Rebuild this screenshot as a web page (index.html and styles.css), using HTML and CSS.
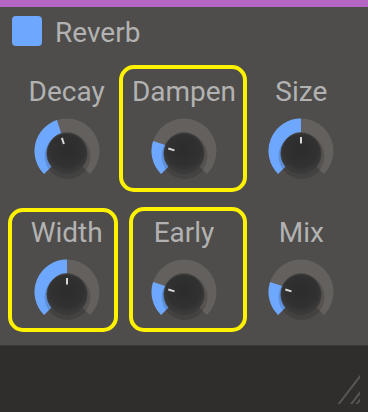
FILE: index.html
```html
<!DOCTYPE html>
<html lang="en">
<head>
    <meta charset="UTF-8">
    <meta name="viewport" content="width=device-width, initial-scale=1.0">
    <title>Reverb</title>
    <link rel="stylesheet" href="styles.css">
</head>
<body>

<div class="topbar"></div>

<div class="header">
    <div class="toggle"></div>
    <span class="title">Reverb</span>
</div>

<div class="controls">
    <div class="cell">
        <div class="label">Decay</div>
        <div class="knob" data-value="0.433"></div>
    </div>
    <div class="cell hl hl-dampen">
        <div class="label">Dampen</div>
        <div class="knob" data-value="0.233"></div>
    </div>
    <div class="cell">
        <div class="label">Size</div>
        <div class="knob" data-value="0.5"></div>
    </div>
    <div class="cell hl hl-width">
        <div class="label">Width</div>
        <div class="knob" data-value="0.5"></div>
    </div>
    <div class="cell hl hl-early">
        <div class="label">Early</div>
        <div class="knob" data-value="0.233"></div>
    </div>
    <div class="cell">
        <div class="label">Mix</div>
        <div class="knob" data-value="0.233"></div>
    </div>
</div>

<div class="footer">
    <svg class="grip" width="26" height="32" viewBox="0 0 26 32">
        <polygon points="3.5,32 6,32 26,6 26,2.75" fill="#585755"/>
        <polygon points="16,32 18.5,32 26,22.25 26,19" fill="#585755"/>
        <polygon points="21.5,32 24,32 26,29.4 26,26.15" fill="#585755"/>
    </svg>
</div>

<script>
    // knob angles run from -135 (min) to +135 (max), 0 = straight up
    function pt(cx, cy, r, deg) {
        const a = deg * Math.PI / 180;
        return [(cx + r * Math.sin(a)).toFixed(2), (cy - r * Math.cos(a)).toFixed(2)];
    }

    function band(cx, cy, r1, r2, a0, a1) {
        const large = (a1 - a0) > 180 ? 1 : 0;
        const o0 = pt(cx, cy, r2, a0), o1 = pt(cx, cy, r2, a1);
        const i1 = pt(cx, cy, r1, a1), i0 = pt(cx, cy, r1, a0);
        return `M${o0} A${r2} ${r2} 0 ${large} 1 ${o1} L${i1} A${r1} ${r1} 0 ${large} 0 ${i0} Z`;
    }

    document.querySelectorAll('.knob').forEach(function (k, idx) {
        const v = parseFloat(k.dataset.value);
        const ang = -135 + v * 270;
        const p1 = pt(35, 37.5, 10, ang);
        const p2 = pt(35, 37.5, 16.5, ang);
        k.innerHTML = `
            <svg width="70" height="70" viewBox="0 0 70 70">
                <defs>
                    <radialGradient id="kg${idx}" cx="50%" cy="40%" r="60%">
                        <stop offset="0%" stop-color="#2c2c2c"/>
                        <stop offset="70%" stop-color="#313131"/>
                        <stop offset="100%" stop-color="#3d3d3d"/>
                    </radialGradient>
                </defs>
                <path d="${band(35, 35, 19, 32.5, -135, 135)}" fill="#63605d"/>
                <path d="${band(35, 35, 19, 32.5, -135, ang)}" fill="#6ea8fe"/>
                <circle cx="35.5" cy="40" r="23" fill="rgba(0,0,0,0.14)"/>
                <circle cx="35" cy="37.5" r="20" fill="url(#kg${idx})" stroke="#3a3a3a" stroke-width="1"/>
                <line x1="${p1[0]}" y1="${p1[1]}" x2="${p2[0]}" y2="${p2[1]}" stroke="#d8d8d8" stroke-width="2"/>
            </svg>`;
    });
</script>

</body>
</html>
```

FILE: styles.css
```css
body {
    margin: 0;
    width: 368px;
    height: 412px;
    background-color: #4e4d4b;
    font-family: Roboto, "Liberation Sans", sans-serif;
    color: #b2b2b2;
    overflow: hidden;
}
.topbar {
    height: 7px;
    background-color: #b565c2;
}
.header {
    display: flex;
    align-items: flex-start;
    gap: 13px;
    height: 59px;
    padding: 9px 12px 0;
    box-sizing: border-box;
}
.toggle {
    width: 30px;
    height: 30px;
    border-radius: 4px;
    background-color: #6ea8fe;
}
.title {
    font-size: 28px;
    line-height: 33px;
}
.controls {
    display: grid;
    grid-template-columns: repeat(3, 1fr);
    grid-template-rows: 141px 138px;
    padding: 0 8px;
}
.cell {
    position: relative;
    display: flex;
    flex-direction: column;
    align-items: center;
    padding-top: 10px;
}
.label {
    font-size: 28px;
    line-height: 32px;
}
.knob {
    width: 70px;
    height: 70px;
    margin-top: 8px;
}
.knob svg {
    display: block;
}
.hl::after {
    content: "";
    position: absolute;
    border: 4px solid #fff200;
    border-radius: 15px;
}
.hl-dampen::after {
    top: -1px;
    left: -6px;
    right: -4px;
    bottom: 15px;
}
.hl-width::after {
    top: 1px;
    left: 0;
    right: 7px;
    bottom: 13px;
}
.hl-early::after {
    top: 0;
    left: 4px;
    right: -4px;
    bottom: 13px;
}
.footer {
    display: flex;
    justify-content: flex-end;
    align-items: flex-end;
    height: 67px;
    padding: 0 8px 8px 0;
    box-sizing: border-box;
    background-color: #2f2e2c;
    border-top: 1px solid #3a3937;
}
.grip {
    display: block;
}
```
